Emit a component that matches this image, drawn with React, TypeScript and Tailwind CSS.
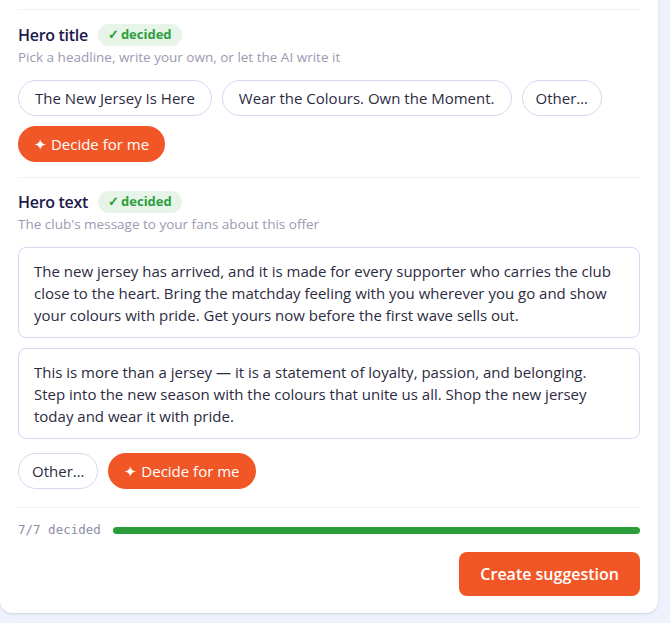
const font = { fontFamily: '"Open Sans", "Noto Sans", sans-serif' };

const Badge = () => (
  <span className="inline-flex items-center gap-0.5 rounded-full bg-[#e6f5e8] px-2.5 h-[22px] text-[13px] font-bold text-[#2e9e3e]">
    <span className="text-[13px]">✓</span>
    decided
  </span>
);

const Chip = ({ label, narrow }: { label: string; narrow?: boolean }) => (
  <button
    className={
      narrow
        ? "h-9 rounded-full border border-[#d9d6f2] bg-white px-[13px] text-[15px] text-[#2d2b3f]"
        : "h-9 rounded-full border border-[#d9d6f2] bg-white px-4 text-[15px] text-[#2d2b3f]"
    }
  >
    {label}
  </button>
);

const DecideButton = () => (
  <button className="h-9 rounded-full bg-[#f15627] px-4 text-[15px] text-white">
    ✦ Decide for me
  </button>
);

const SectionHead = ({ title, hint }: { title: string; hint: string }) => (
  <div>
    <div className="flex items-center gap-2.5">
      <h3 className="text-[16px] leading-6 font-semibold tracking-[-0.3px] text-[#1c1a4a]">{title}</h3>
      <Badge />
    </div>
    <p className="text-[13.5px] leading-[21px] text-[#9b9ab2]">{hint}</p>
  </div>
);

const texts = [
  "The new jersey has arrived, and it is made for every supporter who carries the club close to the heart. Bring the matchday feeling with you wherever you go and show your colours with pride. Get yours now before the first wave sells out.",
  "This is more than a jersey — it is a statement of loyalty, passion, and belonging. Step into the new season with the colours that unite us all. Shop the new jersey today and wear it with pride.",
];

export default function App() {
  return (
    <div className="min-h-[623px] bg-[#eef2fc] pr-3 pb-2.5" style={font}>
      <div className="w-[658px] rounded-b-xl bg-white px-[18px] pt-[9px] pb-[17px] shadow-sm">
        <div className="border-t border-[#f0f0f5] pt-[13px]">
          <SectionHead title="Hero title" hint="Pick a headline, write your own, or let the AI write it" />
          <div className="mt-3 flex flex-wrap gap-2.5">
            <Chip label="The New Jersey Is Here" />
            <Chip label="Wear the Colours. Own the Moment." />
            <Chip label="Other…" narrow />
            <DecideButton />
          </div>
        </div>

        <div className="mt-[15px] border-t border-[#f0f0f5] pt-3">
          <SectionHead title="Hero text" hint="The club's message to your fans about this offer" />
          <div className="mt-3 flex flex-col gap-2.5">
            {texts.map((t) => (
              <div
                key={t}
                className="rounded-lg border border-[#d9d6f2] pt-3 pb-[11px] pl-[15px] pr-[22px] text-[15px] leading-[22px] text-[#2d2b3f]"
              >
                {t}
              </div>
            ))}
          </div>
          <div className="mt-3.5 flex gap-2.5">
            <Chip label="Other…" narrow />
            <DecideButton />
          </div>
        </div>

        <div className="mt-[18px] border-t border-[#f0f0f5] pt-3">
          <div className="flex h-5 items-center gap-3">
            <span className="text-[12.5px] text-[#8e8da6]" style={{ fontFamily: '"DejaVu Sans Mono", monospace' }}>
              7/7 decided
            </span>
            <div className="h-[7px] flex-1 rounded-full bg-[#2a9d3a]" />
          </div>
          <div className="mt-3 flex justify-end">
            <button className="h-11 rounded-lg bg-[#f15627] px-[21px] text-[16px] font-semibold text-white">
              Create suggestion
            </button>
          </div>
        </div>
      </div>
    </div>
  );
}
